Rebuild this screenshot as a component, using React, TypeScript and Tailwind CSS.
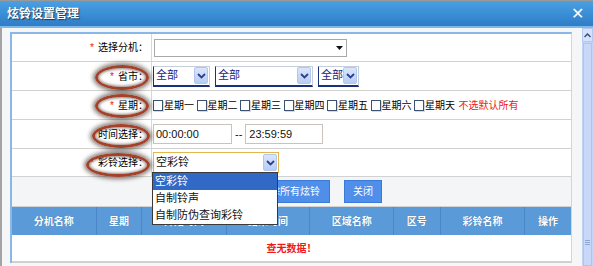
import React from "react";

const F = '"Liberation Sans", "Noto Sans CJK SC", sans-serif';

function Chevron() {
  return (
    <svg width="9" height="6" viewBox="0 0 9 6">
      <path d="M1 1 L4.5 4.5 L8 1" stroke="#2b3f8f" strokeWidth="1.8" fill="none" />
    </svg>
  );
}

function XpSelect({ w, text }: { w: number; text: string }) {
  return (
    <div
      className="h-[21px] flex items-center bg-white border-t border-t-[#c5cfdc] border-l border-l-[#1c2f7a] border-b-2 border-b-[#1c2f7a] border-r border-r-[#c5cfdc]"
      style={{ width: w }}
    >
      <span className="flex-1 pl-[2px] text-[11px] text-[#1a237e] leading-none">{text}</span>
      <div className="w-[14px] h-[17px] mr-[1px] rounded-[2px] bg-gradient-to-b from-[#dbe6fb] to-[#b8cdf4] border border-[#b3c6ef] flex items-center justify-center">
        <Chevron />
      </div>
    </div>
  );
}

function Ellipse({ x, y, w, h }: { x: number; y: number; w: number; h: number }) {
  return (
    <div
      className="absolute rounded-[50%] border-[3px] border-[#a3412a] shadow-[0_0_4px_2px_rgba(50,35,25,0.6),inset_0_0_3px_1px_rgba(50,35,25,0.55)] pointer-events-none"
      style={{ left: x, top: y, width: w, height: h }}
    />
  );
}

function Cb({ label }: { label: string }) {
  return (
    <span className="flex items-center mr-[2.5px]">
      <span className="w-[10px] h-[11px] border border-[#3b5270] bg-white mr-[1px] shadow-[1px_1px_0_rgba(0,0,0,0.15)]" />
      <span>{label}</span>
    </span>
  );
}

export default function App() {
  const labelCls = "w-[140px] shrink-0 flex items-center justify-end pr-[3px] text-[10px] text-black border-r border-[#d8d8d8]";
  const rowCls = "flex border-b border-[#d2d2d2]";
  const cols = [
    { w: 85, t: "分机名称" },
    { w: 46, t: "星期" },
    { w: 85, t: "开始时间" },
    { w: 84, t: "结束时间" },
    { w: 84, t: "区域名称" },
    { w: 47, t: "区号" },
    { w: 85, t: "彩铃名称" },
    { w: 46, t: "操作" },
  ];
  return (
    <div className="w-[593px] h-[266px] relative overflow-hidden bg-[#f3f4f6]" style={{ fontFamily: F }}>
      {/* title bar */}
      <div className="h-[28px] border-t border-[#9a9a9a] bg-gradient-to-b from-[#4aa0e0] via-[#3a8fd6] to-[#2f7cc6] flex items-center justify-between px-[7px] border-b-2 border-b-[#7fb7e8]">
        <span className="text-white font-bold text-[12px] [text-shadow:1px_1px_1px_rgba(0,0,0,0.6)]">炫铃设置管理</span>
        <span className="text-white text-[16px] leading-none mr-[2px]">✕</span>
      </div>
      <div className="flex h-[238px]">
        <div className="flex-1 border-l-2 border-[#a3a3a3] bg-[#f5f6f8] pl-[8px] pt-[4px] pr-[9px]">
          <div className="w-[562px] border-l-2 border-t-2 border-[#8ab8e6] border-r border-r-[#d5d5d5] bg-white relative">
            {/* row 1 */}
            <div className={rowCls + " h-[28px]"}>
              <div className={labelCls}>
                <span className="text-[#e02020] mr-[4px] text-[10px]">*</span>选择分机：
              </div>
              <div className="flex items-center pl-[2px]">
                <div className="w-[193px] h-[18px] border border-[#a8a8a8] bg-white flex items-center justify-end pr-[3px]">
                  <svg width="7" height="4" viewBox="0 0 7 4"><path d="M0 0 L7 0 L3.5 4 Z" fill="#111" /></svg>
                </div>
              </div>
            </div>
            {/* row 2 */}
            <div className={rowCls + " h-[29px]"}>
              <div className={labelCls}>
                <span className="text-[#e02020] mr-[4px]">*</span>省市：
              </div>
              <div className="flex items-center pl-[1px] gap-[5px]">
                <XpSelect w={57} text="全部" />
                <XpSelect w={98} text="全部" />
                <XpSelect w={41} text="全部" />
              </div>
            </div>
            {/* row 3 */}
            <div className={rowCls + " h-[29px]"}>
              <div className={labelCls}>
                <span className="text-[#e02020] mr-[4px]">*</span>星期：
              </div>
              <div className="flex items-center text-[10px] text-black pl-[1px]">
                <Cb label="星期一" />
                <Cb label="星期二" />
                <Cb label="星期三" />
                <Cb label="星期四" />
                <Cb label="星期五" />
                <Cb label="星期六" />
                <Cb label="星期天" />
                <span className="text-[#f01818] ml-[1px]">不选默认所有</span>
              </div>
            </div>
            {/* row 4 */}
            <div className={rowCls + " h-[29px]"}>
              <div className={labelCls}>时间选择：</div>
              <div className="flex items-center pl-[1px] text-[11px] text-[#111]">
                <div className="w-[79px] h-[20px] border border-[#c8c4bc] bg-white flex items-center pl-[2px]">00:00:00</div>
                <span className="mx-[3px]">--</span>
                <div className="w-[78px] h-[20px] border border-[#c8c4bc] bg-white flex items-center pl-[3px]">23:59:59</div>
              </div>
            </div>
            {/* row 5 */}
            <div className={rowCls + " h-[28px]"}>
              <div className={labelCls}>
                <span className="text-[#e02020] mr-[4px]">*</span>彩铃选择：
              </div>
              <div className="flex items-center pl-[1px]">
                <div className="w-[126px] h-[21px] border border-[#e3b64f] bg-white flex items-center">
                  <span className="flex-1 pl-[2px] text-[11px] text-[#111]">空彩铃</span>
                  <div className="w-[14px] h-[17px] mr-[1px] rounded-[2px] bg-gradient-to-b from-[#dbe6fb] to-[#b8cdf4] border border-[#b3c6ef] flex items-center justify-center">
                    <Chevron />
                  </div>
                </div>
              </div>
            </div>
            {/* buttons row */}
            <div className="h-[30px] bg-[#f4f5f7] border-b border-[#d2d2d2] flex items-center pl-[238px] gap-[14px]">
              <div className="h-[23px] w-[80px] bg-[#4f8ee9] border border-[#3b7ad8] text-white text-[10px] flex items-center justify-center">删除所有炫铃</div>
              <div className="h-[23px] w-[38px] bg-[#4f8ee9] border border-[#3b7ad8] text-white text-[10px] flex items-center justify-center">关闭</div>
            </div>
            {/* header */}
            <div className="h-[28px] bg-[#5b9ad8] flex">
              {cols.map((c, i) => (
                <div
                  key={i}
                  className={"flex items-center justify-center text-white font-bold text-[10px] [text-shadow:0_0_1px_rgba(0,0,0,0.3)] " + (i < cols.length - 1 ? "border-r border-[#4a86c8]" : "")}
                  style={{ width: c.w }}
                >
                  {c.t}
                </div>
              ))}
            </div>
            {/* data */}
            <div className="h-[28px] flex items-center justify-center text-[#f01818] font-bold text-[10px] border-b-2 border-[#d0d0d0]">
              查无数据！
            </div>

            {/* dropdown list overlay */}
            <div className="absolute left-[140px] top-[138px] w-[126px] border border-[#3a3a3a] bg-white text-[11px] text-[#111] leading-[17px]">
              <div className="bg-[#3169c6] text-white pl-[2px]">空彩铃</div>
              <div className="pl-[2px]">自制铃声</div>
              <div className="pl-[2px]">自制防伪查询彩铃</div>
            </div>
          </div>
          {/* ellipses */}
          <Ellipse x={95} y={65} w={54} h={25} />
          <Ellipse x={95} y={94} w={54} h={24} />
          <Ellipse x={92} y={124} w={58} h={24} />
          <Ellipse x={86} y={153} w={64} h={24} />
        </div>
        {/* scrollbar */}
        <div className="w-[11px] bg-[#c3d5f7] flex flex-col">
          <div className="h-[14px] bg-[#d6e2fb] border border-[#b3c7ef] flex items-center justify-center">
            <svg width="7" height="5" viewBox="0 0 7 5"><path d="M0.5 4 L3.5 1 L6.5 4" stroke="#3b4f8a" strokeWidth="1.5" fill="none" /></svg>
          </div>
          <div className="flex-1 mt-[1px] mx-[1px] bg-[#c9d8f8] border border-[#aec3ee] flex flex-col items-center pt-[196px]">
            <div className="w-[5px] h-px bg-[#8fa6d8] mb-px" />
            <div className="w-[5px] h-px bg-[#8fa6d8] mb-px" />
            <div className="w-[5px] h-px bg-[#8fa6d8]" />
          </div>
        </div>
      </div>
    </div>
  );
}
